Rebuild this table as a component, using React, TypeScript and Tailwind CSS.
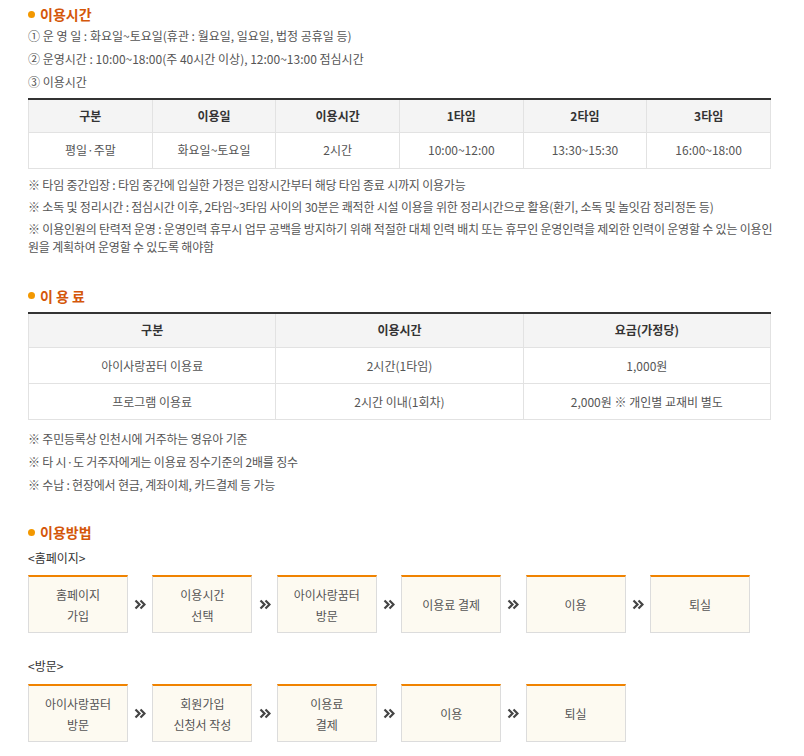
import React from "react";

const font = { fontFamily: '"Noto Sans CJK KR", "Noto Sans", sans-serif' };

function Title({ children }: { children: React.ReactNode }) {
  return (
    <h3 className="flex items-center gap-[5px] text-[14px] font-bold leading-[16px] text-[#d4570a]">
      <span className="h-[7px] w-[7px] rounded-full bg-[#f39800]" />
      {children}
    </h3>
  );
}

function Th({ children }: { children: React.ReactNode }) {
  return (
    <th className="h-[33px] border-x border-b border-[#e2e2e2] bg-[#f4f4f4] text-center font-bold text-[#333]">
      {children}
    </th>
  );
}

function Td({ children }: { children: React.ReactNode }) {
  return (
    <td className="h-[36px] border border-[#e2e2e2] text-center text-[#555]">
      {children}
    </td>
  );
}

function Notes({ items, className }: { items: string[]; className: string }) {
  return (
    <ul className={`-mr-[6px] flex flex-col leading-[18px] tracking-[-0.2px] text-[#555] ${className}`}>
      {items.map((t) => (
        <li key={t}>※ {t}</li>
      ))}
    </ul>
  );
}

function Arrow() {
  return (
    <span className="flex w-[24.4px] justify-center">
      <svg width="12" height="11" viewBox="0 0 12 11" fill="none" stroke="#444" strokeWidth="2.2">
        <path d="M1.5 1.5 L5.5 5.5 L1.5 9.5" />
        <path d="M6.5 1.5 L10.5 5.5 L6.5 9.5" />
      </svg>
    </span>
  );
}

function Flow({ steps }: { steps: string[][] }) {
  return (
    <div className="flex items-center">
      {steps.map((s, i) => (
        <React.Fragment key={i}>
          {i > 0 && <Arrow />}
          <div className="flex h-[58px] w-[100px] flex-col items-center justify-center border border-t-2 border-[#dcdcdc] border-t-[#f08300] bg-[#fdfaf1] text-center leading-[21px] text-[#555]">
            {s.map((l) => (
              <span key={l}>{l}</span>
            ))}
          </div>
        </React.Fragment>
      ))}
    </div>
  );
}

export default function App() {
  return (
    <div style={font} className="w-[804px] bg-white pl-[28px] pt-[6px] text-[12px] text-[#444]">
      <div className="w-[743px]">
        <Title>이용시간</Title>
        <div className="mt-[2px] leading-[23px] text-[#555]">
          <p>① 운 영 일 : 화요일~토요일(휴관 : 월요일, 일요일, 법정 공휴일 등)</p>
          <p>② 운영시간 : 10:00~18:00(주 40시간 이상), 12:00~13:00 점심시간</p>
          <p>③ 이용시간</p>
        </div>
        <table className="mt-[5px] w-full table-fixed border-collapse border-t-2 border-t-[#333]">
          <thead>
            <tr>
              {["구분", "이용일", "이용시간", "1타임", "2타임", "3타임"].map((h) => (
                <Th key={h}>{h}</Th>
              ))}
            </tr>
          </thead>
          <tbody>
            <tr>
              {["평일·주말", "화요일~토요일", "2시간", "10:00~12:00", "13:30~15:30", "16:00~18:00"].map((d) => (
                <Td key={d}>{d}</Td>
              ))}
            </tr>
          </tbody>
        </table>
        <Notes
          className="mt-[7px] gap-[4px]"
          items={[
            "타임 중간입장 : 타임 중간에 입실한 가정은 입장시간부터 해당 타임 종료 시까지 이용가능",
            "소독 및 정리시간 : 점심시간 이후, 2타임~3타임 사이의 30분은 쾌적한 시설 이용을 위한 정리시간으로 활용(환기, 소독 및 놀잇감 정리정돈 등)",
            "이용인원의 탄력적 운영 : 운영인력 휴무시 업무 공백을 방지하기 위해 적절한 대체 인력 배치 또는 휴무인 운영인력을 제외한 인력이 운영할 수 있는 이용인원을 계획하여 운영할 수 있도록 해야함",
          ]}
        />

        <div className="mt-[32px]">
          <Title>이 용 료</Title>
        </div>
        <table className="mt-[8px] w-full table-fixed border-collapse border-t-2 border-t-[#333]">
          <thead>
            <tr>
              <th className="h-[35px] border-x border-b border-[#e2e2e2] bg-[#f4f4f4] font-bold text-[#333]">구분</th>
              <th className="h-[35px] border-x border-b border-[#e2e2e2] bg-[#f4f4f4] font-bold text-[#333]">이용시간</th>
              <th className="h-[35px] border-x border-b border-[#e2e2e2] bg-[#f4f4f4] font-bold text-[#333]">요금(가정당)</th>
            </tr>
          </thead>
          <tbody>
            <tr>
              <Td>아이사랑꿈터 이용료</Td>
              <Td>2시간(1타임)</Td>
              <Td>1,000원</Td>
            </tr>
            <tr>
              <Td>프로그램 이용료</Td>
              <Td>2시간 이내(1회차)</Td>
              <Td>2,000원 ※ 개인별 교재비 별도</Td>
            </tr>
          </tbody>
        </table>
        <Notes
          className="mt-[10px] gap-[5px]"
          items={[
            "주민등록상 인천시에 거주하는 영유아 기준",
            "타 시·도 거주자에게는 이용료 징수기준의 2배를 징수",
            "수납 : 현장에서 현금, 계좌이체, 카드결제 등 가능",
          ]}
        />

        <div className="mt-[30px]">
          <Title>이용방법</Title>
        </div>
        <p className="mt-[9px] leading-[17px] text-[#333]">&lt;홈페이지&gt;</p>
        <div className="mt-[9px]">
          <Flow
            steps={[
              ["홈페이지", "가입"],
              ["이용시간", "선택"],
              ["아이사랑꿈터", "방문"],
              ["이용료 결제"],
              ["이용"],
              ["퇴실"],
            ]}
          />
        </div>
        <p className="mt-[24px] leading-[17px] text-[#333]">&lt;방문&gt;</p>
        <div className="mt-[10px] pb-[16px]">
          <Flow
            steps={[
              ["아이사랑꿈터", "방문"],
              ["회원가입", "신청서 작성"],
              ["이용료", "결제"],
              ["이용"],
              ["퇴실"],
            ]}
          />
        </div>
      </div>
    </div>
  );
}
